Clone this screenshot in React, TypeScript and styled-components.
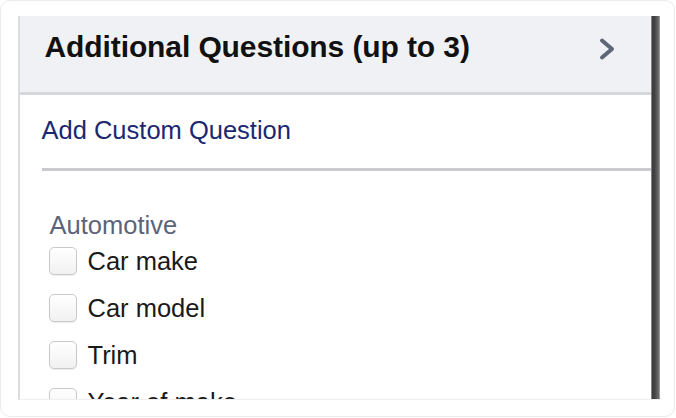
import React from 'react';
import styled, { createGlobalStyle } from 'styled-components';

const GlobalStyle = createGlobalStyle`
  * {
    box-sizing: border-box;
  }
  body {
    margin: 0;
    background: #ffffff;
    font-family: "Liberation Sans", Arial, Helvetica, sans-serif;
  }
`;

const Frame = styled.div`
  width: 675px;
  height: 417px;
  border: 1.5px solid #ebebeb;
  border-radius: 10px;
  padding: 14.5px 0 0 16.5px;
  background: #ffffff;
`;

const Panel = styled.div`
  display: flex;
  width: 642px;
  height: 384px;
  overflow: hidden;
  border-left: 2px solid #dcdde1;
  border-bottom: 1px solid #eeeeee;
`;

const Content = styled.div`
  flex: 1;
  display: flex;
  flex-direction: column;
  min-width: 0;
  overflow: hidden;
  & > * {
    flex-shrink: 0;
  }
`;

const ScrollEdge = styled.div`
  width: 9px;
  flex-shrink: 0;
  background: linear-gradient(
    to right,
    #a8a8a8 0,
    #3c3c3c 1.5px,
    #434343 40%,
    #6c6c6c 85%,
    #b4b4b4 100%
  );
`;

const Header = styled.div`
  display: flex;
  align-items: flex-start;
  height: 79px;
  padding: 14px 35px 0 25px;
  background: #f0f1f4;
  border-bottom: 3px solid #d6d7db;
`;

const Title = styled.h2`
  margin: 0;
  font-size: 30px;
  line-height: 34px;
  font-weight: 700;
  color: #111111;
  letter-spacing: -0.1px;
`;

const Chevron = styled.svg`
  margin-left: auto;
  margin-top: 7px;
  width: 18px;
  height: 24px;
`;

const LinkRow = styled.div`
  margin-left: 22px;
  padding: 20px 0 23px;
  border-bottom: 3px solid #cacbcf;
`;

const CustomLink = styled.a`
  font-size: 25.5px;
  line-height: 30px;
  color: #1b2870;
  text-decoration: none;
  cursor: pointer;
`;

const Group = styled.div`
  display: flex;
  flex-direction: column;
  padding: 39px 0 0 30px;
`;

const GroupTitle = styled.div`
  font-size: 25.5px;
  line-height: 30px;
  color: #5c6479;
`;

const OptionList = styled.div`
  display: flex;
  flex-direction: column;
  gap: 19.3px;
  margin-top: 7px;
  margin-left: -1px;
`;

const Option = styled.label`
  display: flex;
  align-items: center;
  gap: 11px;
  height: 28px;
  flex-shrink: 0;
  cursor: pointer;
`;

const Box = styled.span`
  width: 28px;
  height: 28px;
  flex-shrink: 0;
  border: 1.5px solid #c9c9c9;
  border-radius: 5px;
  background: linear-gradient(#ffffff, #f1f1f1);
  box-shadow: 0 1px 1px rgba(0, 0, 0, 0.08);
`;

const OptionText = styled.span`
  font-size: 25.5px;
  line-height: 30px;
  color: #1a1a1a;
`;

const options = ['Car make', 'Car model', 'Trim', 'Year of make'];

export default function App() {
  return (
    <>
      <GlobalStyle />
      <Frame>
        <Panel>
          <Content>
            <Header>
              <Title>Additional Questions (up to 3)</Title>
              <Chevron viewBox="0 0 18 24" fill="none">
                <polyline
                  points="4,3.5 14,12 4,20.5"
                  stroke="#5f6677"
                  strokeWidth="4"
                  strokeLinecap="round"
                  strokeLinejoin="round"
                />
              </Chevron>
            </Header>
            <LinkRow>
              <CustomLink>Add Custom Question</CustomLink>
            </LinkRow>
            <Group>
              <GroupTitle>Automotive</GroupTitle>
              <OptionList>
                {options.map((o) => (
                  <Option key={o}>
                    <Box />
                    <OptionText>{o}</OptionText>
                  </Option>
                ))}
              </OptionList>
            </Group>
          </Content>
          <ScrollEdge />
        </Panel>
      </Frame>
    </>
  );
}
